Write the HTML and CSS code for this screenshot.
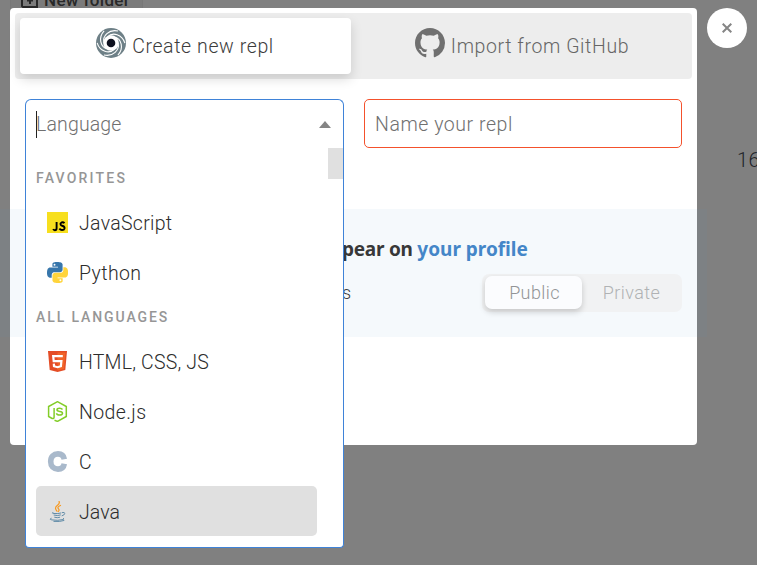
FILE: index.html
```html
<!DOCTYPE html>
<html lang="en">
<head>
<meta charset="utf-8">
<title>Create new repl</title>
<link rel="stylesheet" href="styles.css">
</head>
<body>
<button class="new-folder">
  <svg width="18" height="16" viewBox="0 0 18 16" fill="none" stroke="currentColor" stroke-width="2"><path d="M1 1h6l2 2h7v12H2L1 14zM9 5v7M6 8.500h6"/></svg>
  <span>New folder</span>
</button>
<div class="count">16</div>

<main class="modal">
  <nav class="tabs">
    <div class="tab active">
      <svg width="30" height="30" viewBox="0 0 30 30">
        <circle cx="15" cy="15" r="15" fill="#6e8087"/>
        <circle cx="15" cy="15" r="7.800" fill="#fff"/>
        <g fill="none" stroke="#fff" stroke-width="1.100">
          <path id="swirl" d="M8 15C6 8 13 1 22 3"/>
          <use href="#swirl" transform="rotate(60 15 15)"/>
          <use href="#swirl" transform="rotate(120 15 15)"/>
          <use href="#swirl" transform="rotate(180 15 15)"/>
          <use href="#swirl" transform="rotate(240 15 15)"/>
          <use href="#swirl" transform="rotate(300 15 15)"/>
        </g>
        <circle cx="15" cy="15" r="4.300" fill="#0d101e"/>
      </svg>
      <span class="t-create">Create new repl</span>
    </div>
    <div class="tab import">
      <svg width="30" height="30" viewBox="0 0 16 16" fill="#707070"><path d="M8 0C3.580 0 0 3.580 0 8c0 3.540 2.290 6.530 5.470 7.590.4.070.55-.17.55-.38 0-.19-.01-.82-.01-1.490-2.010.37-2.530-.49-2.690-.94-.09-.23-.48-.94-.82-1.130-.28-.15-.68-.52-.01-.53.63-.01 1.080.58 1.230.82.72 1.210 1.870.87 2.330.66.070-.52.28-.87.51-1.070-1.780-.2-3.640-.89-3.640-3.950 0-.87.31-1.590.82-2.150-.08-.2-.36-1.020.08-2.120 0 0 .67-.21 2.200.82.64-.18 1.320-.27 2-.27s1.360.09 2 .27c1.530-1.040 2.200-.82 2.200-.82.44 1.100.16 1.920.08 2.120.51.56.82 1.270.82 2.150 0 3.070-1.870 3.750-3.650 3.950.29.25.54.73.54 1.480 0 1.070-.01 1.930-.01 2.200 0 .21.15.46.55.38A8.010 8.010 0 0 0 16 8c0-4.420-3.580-8-8-8z"/></svg>
      <span class="t-import">Import from GitHub</span>
    </div>
  </nav>

  <section class="fields">
    <div class="language">
      <div class="control"><i class="caret"></i><span class="t-language">Language</span><i class="arrow"></i></div>
      <div class="menu">
        <div class="scroll-thumb"></div>
        <div class="group t-fav">FAVORITES</div>
        <div class="option">
          <svg width="21" height="21" viewBox="0 0 21 21"><path fill="#f7df1e" d="M0 0h21v21H0z"/><path d="M9.600 10v6.200q0 2-1.800 2-1.100 0-1.600-1.200M17.500 11.200q-1.300-1.300-2.900-.7-1.600.8-.9 2.200.4.700 2.100 1.300 2 .8 1.700 2.400-.4 1.600-2.500 1.600-1.500 0-2.700-1.400" fill="none" stroke="#000" stroke-width="1.900"/></svg>
          <span class="t-js">JavaScript</span>
        </div>
        <div class="option">
          <svg width="21" height="21" viewBox="0 0 24 24"><path fill="#3776ab" d="M14.250.18l.9.200.73.260.59.300.45.320.34.340.25.340.16.330.1.300.04.260.02.200-.01.130V8.500l-.05.630-.13.550-.21.460-.26.380-.3.310-.33.250-.35.190-.35.140-.33.100-.3.070-.26.040-.21.020H8.770l-.69.050-.59.140-.5.220-.41.270-.33.320-.27.350-.2.360-.15.370-.1.350-.07.320-.04.270-.02.210v3.060H3.170l-.21-.03-.28-.07-.32-.12-.35-.18-.36-.26-.36-.36-.35-.46-.32-.59-.28-.73-.21-.88-.14-1.050L0 11.970l.06-1.220.16-1.040.24-.87.32-.71.36-.57.4-.44.42-.33.42-.24.4-.16.36-.1.320-.05.240-.01h.16l.6.010h8.160v-.83H6.180l-.01-2.750-.02-.37.050-.34.110-.31.170-.28.250-.26.310-.23.380-.2.440-.18.510-.15.580-.12.640-.1.710-.06.770-.04.840-.02 1.270.05z"/><path fill="#ffd43b" d="M21.100 6.110l.28.060.32.120.35.180.36.270.36.350.35.470.32.590.28.730.21.880.14 1.040.05 1.230-.06 1.230-.16 1.040-.24.860-.32.710-.36.570-.4.450-.42.330-.42.240-.4.160-.36.090-.32.050-.24.020-.16-.01h-8.220v.82h5.840l.01 2.760.02.360-.05.340-.11.310-.17.290-.25.250-.31.240-.38.200-.44.170-.51.150-.58.130-.64.090-.71.070-.77.040-.84.010-1.270-.04-1.070-.14-.9-.2-.73-.25-.59-.3-.45-.33-.34-.34-.25-.34-.16-.33-.1-.3-.04-.25-.02-.2.010-.13v-5.340l.05-.64.13-.54.210-.46.260-.38.300-.32.330-.24.350-.2.350-.14.330-.1.300-.06.260-.04.210-.02.130-.01h5.840l.69-.05.59-.14.500-.21.410-.28.330-.32.270-.35.200-.36.150-.36.100-.35.070-.32.040-.28.020-.21V6.070h2.090z"/><circle cx="8.600" cy="3.200" r="1.100" fill="#fff"/><circle cx="15.300" cy="20.800" r="1.100" fill="#fff"/></svg>
          <span class="t-python">Python</span>
        </div>
        <div class="group t-all">ALL LANGUAGES</div>
        <div class="option">
          <svg width="21" height="21" viewBox="0 0 21 21"><path fill="#e44d26" d="M1 0h19l-1.700 19-7.800 2L2.700 19z"/><path fill="#f16529" d="M10.500 1.500h8l-1.500 16.400-6.500 1.700z"/><path fill="none" stroke="#fff" stroke-width="2.200" d="M15.800 5.200H6.200l.5 5h7.700l-.5 5-3.400 1-3.500-1-.2-2.500"/></svg>
          <span class="t-html">HTML, CSS, JS</span>
        </div>
        <div class="option">
          <svg width="21" height="21" viewBox="0 0 21 21" fill="none" stroke="#83cd29" stroke-width="1.500"><path d="M7.500 19.200 10.500 20.400 19.300 15.500V5.500L10.500.7 1.600 5.500v10l3.500 2q2 .4 2-1.500V7M15.500 8.500q-1-1.300-3-1.200-2.500.1-2.500 1.500t2.700 1.600q3 .3 2.800 2-.2 1.700-2.900 1.700-2.700 0-3.200-1.900"/></svg>
          <span class="t-node">Node.js</span>
        </div>
        <div class="option">
          <svg width="21" height="21" viewBox="0 0 21 21"><path d="M17.300 8.200C16.700 4.500 14.300 2.900 11 2.900 6.500 2.900 3.700 5.600 3.700 10.500S6.500 18.100 11 18.100c3.300 0 5.700-1.600 6.300-5.300" fill="none" stroke="#a9b9cb" stroke-width="5.600"/></svg>
          <span class="t-c">C</span>
        </div>
        <div class="option selected">
          <svg width="21" height="21" viewBox="0 0 21 21" fill="none"><path d="M11.800 0q1.600 2.400-1.600 4.600-3.400 2.500.1 6M14 4.200q-4.500 1.600-2.300 3.900 1 1.300-.7 2.800" stroke="#f8981d" stroke-width="1.200"/><path d="M6 11.300q-1.900.9 1 1.200 4 .4 7.300-.6M6.700 14q3.700 1.200 7.100-.1M7.300 16.200q3 1 5.800 0M15 11.600q3-.7 2.700 1-.4 1.700-3 2.300M4.600 17.200q-3.200 1 .3 1.700 6 1 11.300-.4 1.600-.7-.2-1.200M6.500 20.400q6.500.6 10.800-1" stroke="#5382a1" stroke-width=".9"/></svg>
          <span class="t-java">Java</span>
        </div>
      </div>
    </div>
    <div class="name"><span class="t-name">Name your repl</span></div>
  </section>

  <section class="privacy">
    <h2><span class="t-pear">pear on</span> <a class="t-profile">your profile</a></h2>
    <div class="privacy-row">
      <span class="t-s">s</span>
      <div class="switch"><div class="choice on"><span class="t-public">Public</span></div><div class="choice"><span class="t-private">Private</span></div></div>
    </div>
  </section>
</main>
<button class="close" aria-label="Close"><svg width="10" height="10" viewBox="0 0 10 10" stroke="#858585" stroke-width="2"><path d="M.7.7l8.600 8.600M9.300.7.7 9.300"/></svg></button>
</body>
</html>
```
FILE: styles.css
```css
* { box-sizing: border-box; }
body {
  position: relative;
  width: 757px;
  height: 565px;
  margin: 0;
  padding: 8px 10px;
  display: flex;
  align-items: flex-start;
  gap: 10px;
  overflow: hidden;
  background: #808080;
  font-family: Roboto, "Noto Sans", sans-serif;
  font-size: 19.5px;
  font-weight: 300;
  letter-spacing: .4px;
  color: #404040;
}
span, a { white-space: nowrap; }
svg { display: block; flex: none; }
.new-folder {
  position: absolute;
  left: 10px;
  top: -20px;
  width: 133px;
  height: 40px;
  padding: 0 0 0 10px;
  display: flex;
  align-items: center;
  gap: 5px;
  border: 1px solid #777;
  background: #7b7b7b;
  color: #282828;
  font: 500 17px Roboto, sans-serif;
  letter-spacing: .35px;
}
.count { position: absolute; left: 737px; top: 147px; line-height: 26px; font-size: 20px; color: #202328; }
.modal {
  position: relative;
  flex: none;
  width: 687px;
  height: 437px;
  padding: 5px;
  border-radius: 4px;
  background: #fff;
}
.tabs { display: flex; height: 66px; padding: 5px; border-radius: 4px; background: #ededed; }
.tab { display: flex; flex: 1; align-items: center; justify-content: center; gap: 6px; color: #666; letter-spacing: .6px; }
.tab svg { margin-top: -6px; }
.tab.active { flex: 0 0 331px; padding-right: 1px; border-radius: 4px; background: #fff; color: #3c3c3c; box-shadow: 0 5px 12px rgba(0, 0, 0, .15); }
.tab.import { padding-left: 6px; }
.fields { display: flex; gap: 20px; padding: 20px 10px 0; }
.language { position: relative; width: 319px; height: 49px; }
.control {
  display: flex;
  align-items: center;
  height: 49px;
  padding: 0 12px 0 10px;
  border: 1px solid #3f83d8;
  border-bottom: 0;
  border-radius: 6px 6px 0 0;
  color: #707070;
  letter-spacing: .15px;
}
.caret { width: 1px; height: 27px; margin-right: -1px; background: #222; }
.arrow { margin-left: auto; border: 6px solid transparent; border-top: 0; border-bottom: 7px solid #858585; }
.menu {
  position: absolute;
  z-index: 2;
  left: 0;
  top: 49px;
  width: 319px;
  height: 400px;
  padding: 10px 26px 0 10px;
  border: 1px solid #3f83d8;
  border-top: 0;
  border-radius: 0 0 4px 4px;
  background: #fff;
}
.scroll-thumb { position: absolute; right: 0; top: 0; width: 15px; height: 31px; background: #e0e0e0; }
.group { height: 39px; line-height: 40px; font-size: 14px; font-weight: 500; letter-spacing: 1.9px; color: #969696; }
.t-fav { letter-spacing: 2.2px; }
.option { display: flex; align-items: center; gap: 11px; height: 50px; padding-left: 11px; border-radius: 5px; color: #2c2c2c; }
.option span { padding-top: 2px; }
.t-js { letter-spacing: .3px; }
.t-html { letter-spacing: .2px; }
.t-java { letter-spacing: .1px; }
.selected { background: #e0e0e0; }
.name { display: flex; align-items: center; width: 318px; height: 49px; padding: 2px 0 0 10px; border: 1px solid #f4512c; border-radius: 5px; color: #707070; letter-spacing: .55px; }
.privacy { height: 128px; margin: 61px -15px 0; padding: 26px 25px 0 343px; background: rgba(70, 145, 205, .055); }
h2 { margin: 0 0 0 -1px; font: 700 19px/28px "Noto Sans", sans-serif; letter-spacing: -.25px; color: #383838; white-space: nowrap; }
a { color: #4486c8; letter-spacing: 0; }
.privacy-row { display: flex; align-items: center; justify-content: space-between; height: 37px; margin-top: 11px; font-size: 18px; }
.t-s { margin-left: -1px; }
.switch { display: flex; width: 200px; height: 38px; padding: 2px 3px 3px; border-radius: 7px; background: #f1f2f3; }
.choice { flex: 1; display: flex; align-items: center; justify-content: center; padding-left: 2px; border-radius: 7px; color: #b0b2b4; }
.on { background: #fbfcfe; color: #929496; box-shadow: 0 3px 6px rgba(0, 0, 0, .18); }
.close { display: flex; align-items: center; justify-content: center; width: 40px; height: 40px; padding: 0; border: 0; border-radius: 50%; background: #fff; }
```
